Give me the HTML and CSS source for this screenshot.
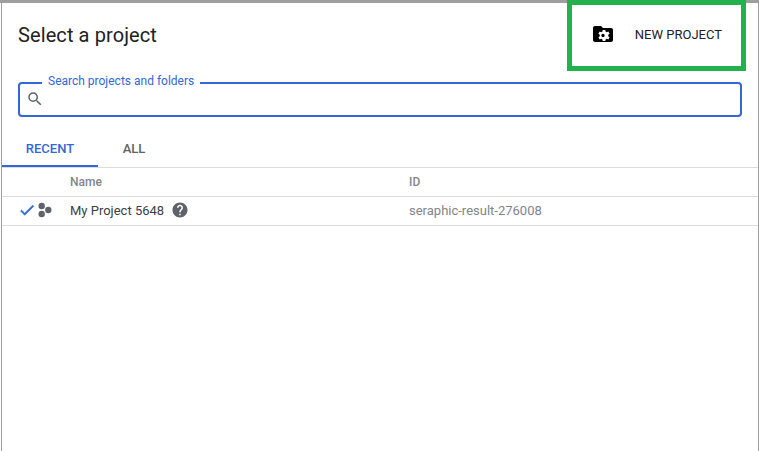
FILE: index.html
```html
<!DOCTYPE html>
<html lang="en">
<head>
<meta charset="utf-8">
<title>Select a project</title>
<link rel="stylesheet" href="styles.css">
</head>
<body>
<div class="dialog">
  <header class="head">
    <h1 class="title">Select a project</h1>
    <button class="new-project">
      <svg class="folder" viewBox="0 0 24 24" width="24" height="24"><path fill="#000" d="M20 6h-8l-2-2H4c-1.100 0-2 .9-2 2v12c0 1.100.9 2 2 2h16c1.100 0 2-.9 2-2V8c0-1.100-.9-2-2-2z"/><path fill="#fff" d="M17.300 13.500c0-.2 0-.5-.1-.7l1.400-1-1.300-2.200-1.600.7c-.4-.3-.8-.6-1.200-.7l-.2-1.700h-2.600l-.2 1.700c-.4.100-.9.400-1.200.7l-1.600-.7-1.300 2.200 1.400 1c-.1.500-.1.900 0 1.400l-1.400 1 1.300 2.200 1.600-.7c.3.300.8.600 1.200.7l.2 1.700h2.600l.2-1.700c.4-.1.800-.4 1.200-.7l1.600.7 1.300-2.200-1.400-1c.1-.2.1-.5.1-.7zm-5.300 1.700a1.700 1.700 0 1 1 0-3.400 1.700 1.700 0 0 1 0 3.400z"/></svg>
      <span>NEW PROJECT</span>
    </button>
  </header>
  <div class="search">
    <span class="search-label">Search projects and folders</span>
    <svg class="search-icon" viewBox="0 0 24 24" width="18" height="18"><path fill="#5f6368" d="M15.500 14h-.79l-.28-.27A6.470 6.470 0 0 0 16 9.500 6.500 6.500 0 1 0 9.500 16c1.610 0 3.090-.59 4.230-1.570l.27.28v.79l5 4.990L20.490 19l-4.990-5zm-6 0C7.010 14 5 11.990 5 9.500S7.010 5 9.500 5 14 7.010 14 9.500 11.990 14 9.500 14z"/></svg>
  </div>
  <nav class="tabs">
    <span class="tab tab-active">RECENT</span>
    <span class="tab">ALL</span>
  </nav>
  <div class="row row-head">
    <span class="cell-icons"></span>
    <span class="cell-name">Name</span>
    <span class="cell-id">ID</span>
  </div>
  <div class="row row-data">
    <span class="cell-icons">
      <svg viewBox="0 0 24 24" width="18" height="18"><path fill="#3367d6" stroke="#3367d6" stroke-width=".8" d="M9 16.170 4.830 12l-1.420 1.410L9 19 21 7l-1.410-1.410z"/></svg>
      <svg viewBox="0 0 16 16" width="16" height="16"><g fill="#5f6368"><circle cx="5.700" cy="4" r="3.200"/><circle cx="5.700" cy="12" r="3.200"/><circle cx="12.300" cy="8" r="3.200"/></g></svg>
    </span>
    <span class="cell-name name-text">My Project 5648
      <svg class="help" viewBox="0 0 24 24" width="18" height="18"><path fill="#5f6368" d="M12 2C6.480 2 2 6.480 2 12s4.480 10 10 10 10-4.480 10-10S17.520 2 12 2zm1 17h-2v-2h2v2zm2.070-7.750-.9.920C13.450 12.900 13 13.500 13 15h-2v-.5c0-1.100.45-2.100 1.170-2.830l1.240-1.260c.37-.36.59-.86.59-1.410 0-1.100-.9-2-2-2s-2 .9-2 2H8c0-2.210 1.790-4 4-4s4 1.790 4 4c0 .88-.36 1.680-.93 2.250z"/></svg>
    </span>
    <span class="cell-id id-text">seraphic-result-276008</span>
  </div>
</div>
<div class="highlight"></div>
</body>
</html>
```
FILE: styles.css
```css
html, body {
  margin: 0;
  height: 100%;
  background: #fff;
  overflow: hidden;
}
body {
  box-sizing: border-box;
  border-top: 3px solid #9e9e9e;
  font-family: Roboto, "Liberation Sans", sans-serif;
  color: #212121;
}
.dialog {
  box-sizing: border-box;
  height: 448px;
  margin-left: 1px;
  border-left: 1px solid #9e9e9e;
  border-right: 1px solid #9e9e9e;
}
.head {
  display: flex;
  align-items: center;
  justify-content: space-between;
  height: 63px;
  padding: 0 36px 0 16px;
}
.title {
  margin: 0;
  font-size: 20px;
  font-weight: 400;
  line-height: 28px;
  letter-spacing: .1px;
}
.new-project {
  display: flex;
  align-items: center;
  gap: 20px;
  padding: 0;
  border: 0;
  background: none;
  font: 400 13px/16px Roboto, "Liberation Sans", sans-serif;
  color: #212121;
}
.folder {
  margin-top: -1px;
}
.search {
  position: relative;
  box-sizing: border-box;
  height: 35px;
  margin: 16px 16px 0 16px;
  border: 2px solid #3367d6;
  border-radius: 4px;
  display: flex;
  align-items: center;
  padding-left: 6px;
}
.search-label {
  position: absolute;
  left: 22px;
  top: -10px;
  padding: 0 6px;
  background: #fff;
  font-size: 12px;
  line-height: 14px;
  color: #3367d6;
}
.search-icon {
  margin-top: -2px;
}
.tabs {
  display: flex;
  height: 51px;
  align-items: stretch;
  border-bottom: 1px solid #dadce0;
  box-sizing: border-box;
}
.tab {
  box-sizing: border-box;
  width: 96px;
  padding-top: 24px;
  text-align: center;
  font-size: 13px;
  font-weight: 500;
  line-height: 16px;
  color: #5f6368;
}
.tab + .tab {
  width: 72px;
}
.tab-active {
  color: #3367d6;
  border-bottom: 2px solid #3367d6;
}
.row {
  display: flex;
  align-items: center;
  box-sizing: border-box;
  height: 29px;
  border-bottom: 1px solid #dadce0;
  font-size: 13px;
}
.row-head {
  font-size: 12px;
  font-weight: 500;
  color: #80868b;
}
.row-data {
  padding-bottom: 2px;
}
.cell-icons {
  display: flex;
  align-items: center;
  width: 68px;
  padding-left: 16px;
  box-sizing: border-box;
}
.cell-name {
  width: 339px;
  display: flex;
  align-items: center;
  gap: 7px;
}
.name-text {
  color: #3c4043;
}
.id-text {
  color: #80868b;
}
.highlight {
  position: absolute;
  left: 567px;
  top: 0;
  width: 179px;
  height: 71px;
  box-sizing: border-box;
  border: 5px solid #22b14c;
}
```
